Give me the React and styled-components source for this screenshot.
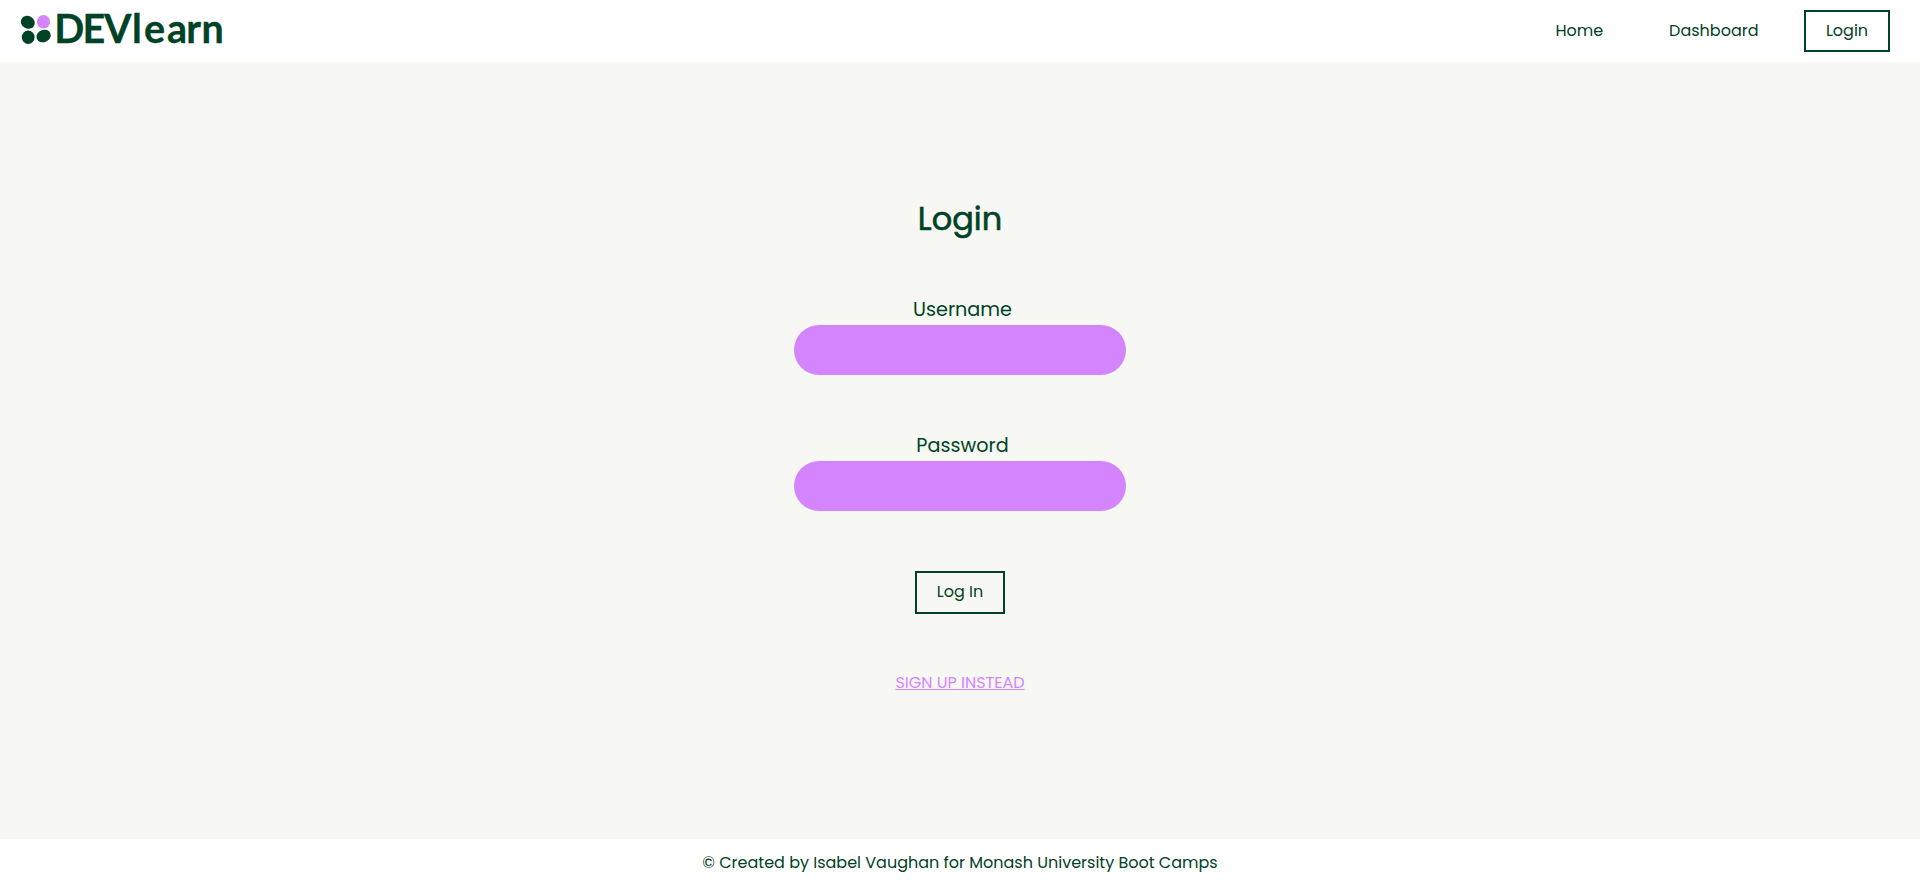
import React from "react";
import styled, { createGlobalStyle } from "styled-components";

const green = "#004225";
const violet = "#d484fd";

const GlobalStyle = createGlobalStyle`
  *, *::before, *::after { box-sizing: border-box; }
  body {
    margin: 0;
    background: #f7f8f3;
    color: ${green};
    font-family: Poppins, Inter, "Liberation Sans", sans-serif;
    font-feature-settings: "cv11" 1;
    font-size: 16px;
    line-height: 24px;
  }
`;

const Page = styled.div`
  min-height: 100vh;
  display: flex;
  flex-direction: column;
`;

const Header = styled.header`
  height: 62px;
  padding: 0 30px 0 20px;
  display: flex;
  align-items: center;
  justify-content: space-between;
  background: #fff;
`;

const LogoSvg = styled.svg`
  display: block;
  width: 210px;
  height: 62px;
`;

const Wordmark = styled.text`
  fill: ${green};
  stroke: ${green};
  stroke-width: 0.3px;
  font-family: Lato, sans-serif;
  font-size: 39.5px;
  font-weight: 700;
`;

const Nav = styled.nav`
  display: flex;
  align-items: center;
`;

const NavLink = styled.a`
  color: inherit;
  text-decoration: none;
  margin-right: ${(p) => p.$gap};
`;

const OutlineButton = styled.button`
  width: ${(p) => p.$width};
  height: ${(p) => p.$height};
  padding: 0 0 ${(p) => p.$lift || "0"};
  border: 2px solid ${green};
  background: transparent;
  color: inherit;
  font: inherit;
  font-feature-settings: inherit;
`;

const Main = styled.main`
  flex: 1;
  display: flex;
  flex-direction: column;
  align-items: center;
  padding-top: 133px;
`;

const Title = styled.h1`
  margin: 0;
  font-size: 32px;
  line-height: 48px;
  font-weight: 400;
  -webkit-text-stroke: 0.6px ${green};
`;

const Form = styled.form`
  display: flex;
  flex-direction: column;
  align-items: center;
  margin-top: 52px;
`;

const Field = styled.div`
  width: 332px;
  display: flex;
  flex-direction: column;
  margin-bottom: ${(p) => p.$after};
`;

const Label = styled.label`
  height: 30px;
  line-height: 30px;
  padding-left: 5px;
  text-align: center;
  font-size: 19.2px;
`;

const Input = styled.input`
  height: 50px;
  padding: 0 20px;
  border: 0;
  border-radius: 25px;
  background: ${violet};
  color: ${green};
  font: inherit;
  outline: none;
`;

const SignUp = styled.a`
  margin-top: 57px;
  color: ${violet};
  text-decoration: underline;
  text-decoration-thickness: 1px;
  text-underline-offset: 1px;
`;

const Footer = styled.footer`
  height: 48px;
  display: flex;
  align-items: center;
  justify-content: center;
  background: #fff;
`;

function Logo() {
  return (
    <LogoSvg viewBox="20 0 210 62" role="img" aria-label="DEVlearn">
      <ellipse cx="27.8" cy="22.3" rx="7.1" ry="6.3" fill={green} transform="rotate(28 27.8 22.3)" />
      <ellipse cx="43.5" cy="21.7" rx="6.6" ry="6.8" fill={violet} />
      <ellipse cx="28.2" cy="37.3" rx="6.4" ry="6.7" fill={green} />
      <ellipse cx="43.6" cy="36" rx="7.3" ry="6.2" fill={green} transform="rotate(-20 43.6 36)" />
      <Wordmark x="54.2 82.6 104 132 144 167 186.2 201.6" y="42.8">
        DEVlearn
      </Wordmark>
    </LogoSvg>
  );
}

export default function App() {
  return (
    <Page>
      <GlobalStyle />
      <Header>
        <Logo />
        <Nav>
          <NavLink $gap="66px">Home</NavLink>
          <NavLink $gap="45.5px">Dashboard</NavLink>
          <OutlineButton $width="86px" $height="42px">Login</OutlineButton>
        </Nav>
      </Header>
      <Main>
        <Title>Login</Title>
        <Form onSubmit={(e) => e.preventDefault()}>
          <Field $after="56px">
            <Label htmlFor="username">Username</Label>
            <Input id="username" type="text" />
          </Field>
          <Field $after="60px">
            <Label htmlFor="password">Password</Label>
            <Input id="password" type="password" />
          </Field>
          <OutlineButton $width="90px" $height="43px" $lift="2px">Log In</OutlineButton>
        </Form>
        <SignUp>SIGN UP INSTEAD</SignUp>
      </Main>
      <Footer>© Created by Isabel Vaughan for Monash University Boot Camps</Footer>
    </Page>
  );
}
